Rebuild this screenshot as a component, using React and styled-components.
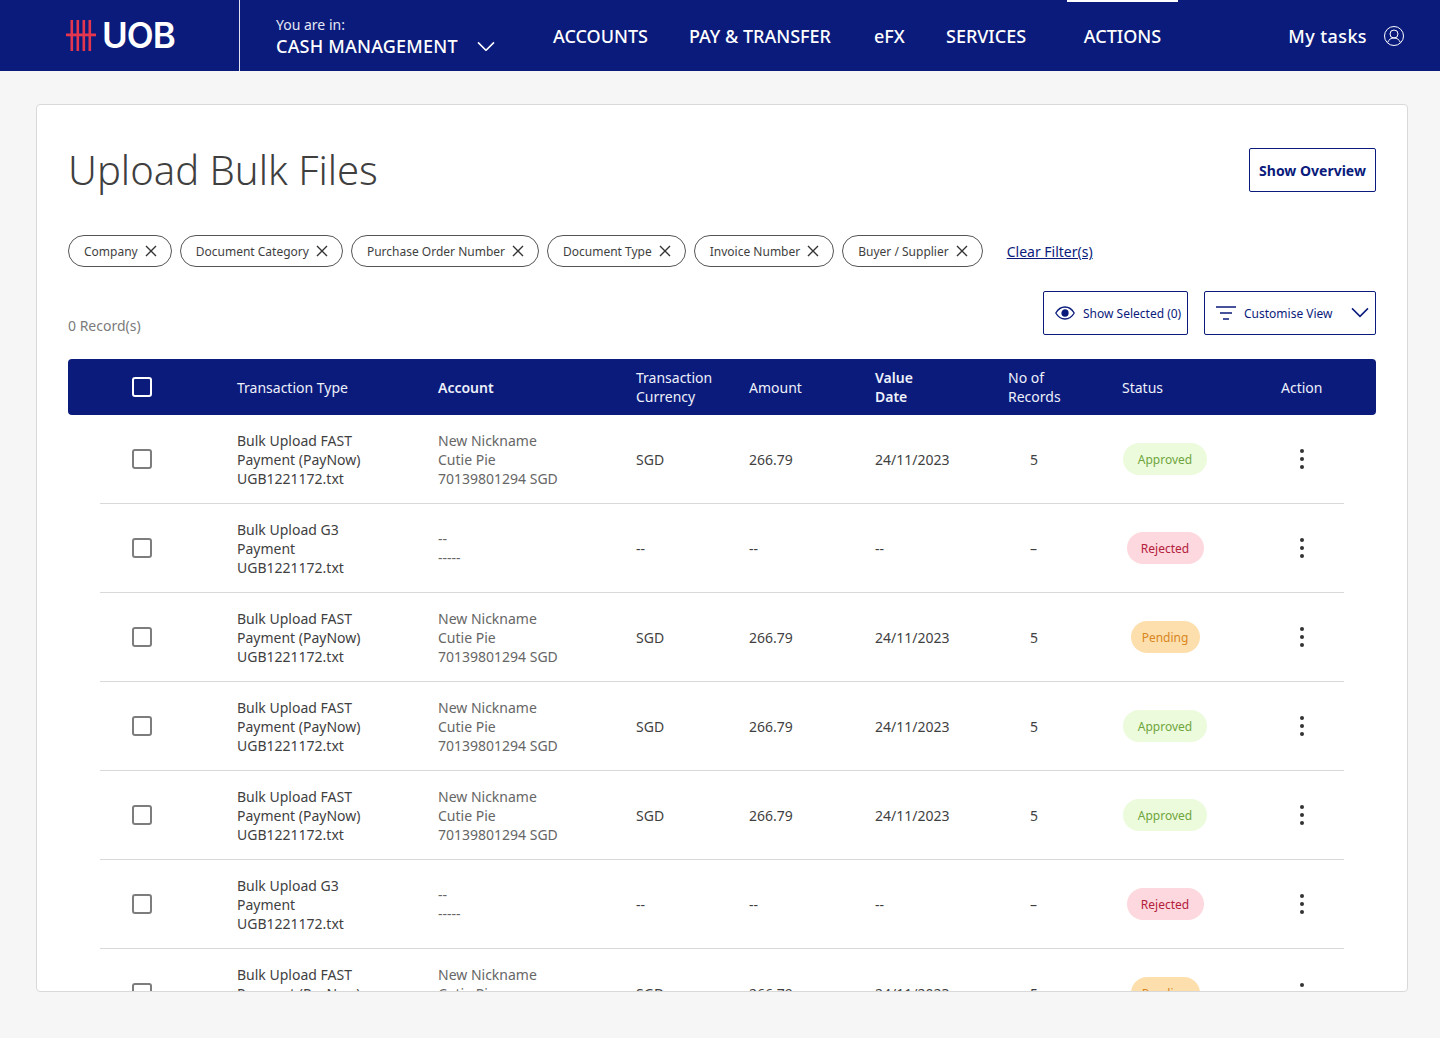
import React from 'react';
import styled, { createGlobalStyle } from 'styled-components';

const NAVY = '#0a1b7c';
const TEXT = '#3f3f3f';

const GlobalStyle = createGlobalStyle`
    html, body {
        margin: 0;
        padding: 0;
        background: #f6f6f6;
        font-family: "Noto Sans", "Open Sans", sans-serif;
        color: ${TEXT};
    }
    * {
        box-sizing: border-box;
    }
`;

const Page = styled.div`
    width: 1440px;
    height: 1038px;
    overflow: hidden;
`;

const Header = styled.header`
    height: 71px;
    background: ${NAVY};
    display: flex;
    color: #fff;
`;

const LogoBox = styled.div`
    width: 240px;
    height: 71px;
    padding-left: 66px;
    display: flex;
    align-items: center;
    gap: 5px;
    border-right: 1px solid #dfe2f0;
`;

const LogoText = styled.span`
    font-family: "Inter", sans-serif;
    font-size: 35px;
    font-weight: 600;
    letter-spacing: -1px;
    line-height: 1;
`;

const Switcher = styled.div`
    width: 313px;
    padding: 15px 0 0 36px;
`;

const SwitcherLabel = styled.div`
    font-size: 14px;
    line-height: 19px;
    color: #e4e7f5;
`;

const SwitcherValue = styled.div`
    display: flex;
    align-items: center;
    gap: 19px;
    font-size: 18px;
    font-weight: 500;
    line-height: 24px;
    letter-spacing: .2px;
`;

const Nav = styled.nav`
    display: flex;
    flex: 1;
    height: 71px;
`;

const NavItem = styled.a`
    width: ${props => props.width}px;
    margin-left: ${props => props.offset || 0}px;
    height: 71px;
    display: flex;
    align-items: center;
    justify-content: ${props => props.active ? 'center' : 'flex-start'};
    font-size: 18px;
    font-weight: 500;
    border-top: 2px solid ${props => props.active ? '#fff' : 'transparent'};
    padding-bottom: 2px;
    white-space: nowrap;
`;

const Tasks = styled.div`
    display: flex;
    align-items: center;
    gap: 17px;
    padding-right: 36px;
    font-size: 18px;
    font-weight: 500;
    letter-spacing: .4px;
`;

const Card = styled.main`
    margin: 33px 0 0 36px;
    width: 1372px;
    height: 888px;
    background: #fff;
    border: 1px solid #d9d9d9;
    border-radius: 4px;
    overflow: hidden;
    padding: 43px 31px 0;
`;

const TitleRow = styled.div`
    display: flex;
    justify-content: space-between;
    height: 44px;
    align-items: center;
`;

const Title = styled.h1`
    margin: 0;
    font-size: 40px;
    font-weight: 300;
    line-height: 48px;
    color: ${TEXT};
`;

const OverviewButton = styled.button`
    width: 127px;
    height: 44px;
    background: #fff;
    border: 1px solid ${NAVY};
    border-radius: 2px;
    color: ${NAVY};
    font-family: inherit;
    font-size: 14px;
    font-weight: 700;
    padding: 0;
`;

const Filters = styled.div`
    display: flex;
    align-items: center;
    gap: 8px;
    margin-top: 43px;
`;

const Chip = styled.div`
    height: 32px;
    display: flex;
    align-items: center;
    gap: 7px;
    padding: 0 14px 0 15px;
    border: 1px solid #555;
    border-radius: 16px;
    font-size: 12px;
    white-space: nowrap;
`;

const ClearLink = styled.a`
    margin-left: 16px;
    font-size: 14px;
    color: ${NAVY};
    text-decoration: underline;
`;

const Tools = styled.div`
    display: flex;
    align-items: flex-end;
    margin-top: 24px;
    height: 44px;
`;

const Records = styled.div`
    flex: 1;
    font-size: 14px;
    line-height: 19px;
    color: #7b7b7b;
    padding-bottom: 0;
`;

const ToolButton = styled.button`
    width: ${props => props.width}px;
    height: 44px;
    margin-left: ${props => props.gap}px;
    display: flex;
    align-items: center;
    background: #fff;
    border: 1px solid ${NAVY};
    border-radius: 2px;
    color: ${NAVY};
    font-family: inherit;
    font-size: 12px;
    padding: 0 0 0 11px;
    white-space: nowrap;
`;

const ToolLabel = styled.span`
    margin-left: ${props => props.gap}px;
`;

const Columns = `
    display: grid;
    grid-template-columns: 137px 201px 198px 113px 126px 133px 114px 159px 63px;
    align-items: center;
`;

const TableHead = styled.div`
    ${Columns}
    height: 56px;
    margin-top: 24px;
    padding-left: 32px;
    background: ${NAVY};
    border-radius: 4px;
    color: #eef0fa;
    font-size: 14px;
    line-height: 19px;
`;

const HeadCell = styled.div`
    font-weight: ${props => props.strong ? 600 : 400};
`;

const Row = styled.div`
    ${Columns}
    height: 89px;
    margin: 0 32px;
    border-bottom: 1px solid #d9d9d9;
    font-size: 14px;
    line-height: 19px;
    color: ${TEXT};
`;

const Cell = styled.div`
    padding-left: ${props => props.indent || 0}px;
    white-space: nowrap;
`;

const Dash = styled.span`
    display: inline-block;
    color: #666;
`;

const Box = styled.span`
    display: block;
    width: 20px;
    height: 20px;
    margin-left: 32px;
    border: 2px solid ${props => props.light ? '#fff' : '#7d7d7d'};
    border-radius: 3px;
`;

const PILLS = {
    Approved: { bg: '#ecfbdc', color: '#6fa53c', width: 84 },
    Rejected: { bg: '#fdd8de', color: '#b4203c', width: 77 },
    Pending: { bg: '#fddfae', color: '#d8861d', width: 69 },
};

const PillSlot = styled.div`
    width: 86px;
    display: flex;
    justify-content: center;
`;

const Pill = styled.span`
    width: ${props => props.width}px;
    height: 32px;
    display: flex;
    align-items: center;
    justify-content: center;
    border-radius: 16px;
    font-size: 12px;
    background: ${props => props.bg};
    color: ${props => props.color};
`;

const Kebab = styled.div`
    display: flex;
    flex-direction: column;
    gap: 4px;
    margin-left: 19px;
`;

const Dot = styled.span`
    width: 4px;
    height: 4px;
    border-radius: 50%;
    background: #333;
`;

const UobMark = () => (
    <svg width="31" height="31" viewBox="0 0 31 31">
        <g fill="#e5364f">
            <rect x="4.5" y="0" width="2.6" height="31" />
            <rect x="10.5" y="0" width="2.6" height="31" />
            <rect x="16.5" y="0" width="2.6" height="31" />
            <rect x="22.5" y="0" width="2.6" height="31" />
            <rect x="0" y="13.5" width="30" height="2.8" />
        </g>
    </svg>
);

const Chevron = ({ color = 'currentColor', size = 18 }) => (
    <svg width={size} height={size * .6} viewBox="0 0 18 10" fill="none" stroke={color} strokeWidth="1.5">
        <path d="M1 1l8 8 8-8" />
    </svg>
);

const CloseIcon = () => (
    <svg width="12" height="12" viewBox="0 0 12 12" fill="none" stroke="#333" strokeWidth="1.4">
        <path d="M1 1l10 10M11 1L1 11" />
    </svg>
);

const UserIcon = () => (
    <svg width="20" height="20" viewBox="0 0 20 20" fill="none" stroke="#fff" strokeWidth="1">
        <circle cx="10" cy="10" r="9.5" />
        <circle cx="10" cy="8" r="4" />
        <path d="M3.6 16.6c1-3 3.4-4.6 6.4-4.6s5.400 1.600 6.400 4.600" />
    </svg>
);

const EyeIcon = () => (
    <svg width="20" height="14" viewBox="0 0 20 14" fill="none" stroke={NAVY} strokeWidth="1.3">
        <path d="M.8 7C3 3.200 6.200 1 10 1s7 2.200 9.200 6C17 10.800 13.800 13 10 13S3 10.800.8 7z" />
        <circle cx="10" cy="7" r="3" fill={NAVY} />
    </svg>
);

const FilterIcon = () => (
    <svg width="20" height="14" viewBox="0 0 20 14" fill="none" stroke={NAVY} strokeWidth="1.6">
        <path d="M0 1h20M4 7h12M7 13h6" />
    </svg>
);

const filters = ['Company', 'Document Category', 'Purchase Order Number', 'Document Type', 'Invoice Number', 'Buyer / Supplier'];

const fast = { type: ['Bulk Upload FAST', 'Payment (PayNow)'], account: ['New Nickname', 'Cutie Pie', '70139801294 SGD'], currency: 'SGD', amount: '266.79', date: '24/11/2023', count: '5' };
const g3 = { type: ['Bulk Upload G3', 'Payment'], account: ['--', '-----'], currency: '--', amount: '--', date: '--', count: '–' };

const rows = [
    { ...fast, status: 'Approved' },
    { ...g3, status: 'Rejected' },
    { ...fast, status: 'Pending' },
    { ...fast, status: 'Approved' },
    { ...fast, status: 'Approved' },
    { ...g3, status: 'Rejected' },
    { ...fast, status: 'Pending' },
];

const App = () => {
    return (
        <Page>
            <GlobalStyle />
            <Header>
                <LogoBox>
                    <UobMark />
                    <LogoText>UOB</LogoText>
                </LogoBox>
                <Switcher>
                    <SwitcherLabel>You are in:</SwitcherLabel>
                    <SwitcherValue>CASH MANAGEMENT <Chevron /></SwitcherValue>
                </Switcher>
                <Nav>
                    <NavItem width={136}>ACCOUNTS</NavItem>
                    <NavItem width={185}>PAY &amp; TRANSFER</NavItem>
                    <NavItem width={72}>eFX</NavItem>
                    <NavItem width={121}>SERVICES</NavItem>
                    <NavItem width={111} active>ACTIONS</NavItem>
                </Nav>
                <Tasks>My tasks <UserIcon /></Tasks>
            </Header>
            <Card>
                <TitleRow>
                    <Title>Upload Bulk Files</Title>
                    <OverviewButton>Show Overview</OverviewButton>
                </TitleRow>
                <Filters>
                    {filters.map((name) => (
                        <Chip key={name}>{name} <CloseIcon /></Chip>
                    ))}
                    <ClearLink>Clear Filter(s)</ClearLink>
                </Filters>
                <Tools>
                    <Records>0 Record(s)</Records>
                    <ToolButton width={145}>
                        <EyeIcon />
                        <ToolLabel gap={8}>Show Selected (0)</ToolLabel>
                    </ToolButton>
                    <ToolButton width={172} gap={16}>
                        <FilterIcon />
                        <ToolLabel gap={8}>Customise View</ToolLabel>
                        <ToolLabel gap={18}><Chevron /></ToolLabel>
                    </ToolButton>
                </Tools>
                <TableHead>
                    <Box light />
                    <HeadCell>Transaction Type</HeadCell>
                    <HeadCell strong>Account</HeadCell>
                    <HeadCell>Transaction<br />Currency</HeadCell>
                    <HeadCell>Amount</HeadCell>
                    <HeadCell strong>Value<br />Date</HeadCell>
                    <HeadCell>No of<br />Records</HeadCell>
                    <HeadCell>Status</HeadCell>
                    <HeadCell>Action</HeadCell>
                </TableHead>
                {rows.map((row, i) => (
                    <Row key={i}>
                        <Box />
                        <Cell>
                            {row.type.map((line) => <div key={line}>{line}</div>)}
                            <div>UGB1221172.txt</div>
                        </Cell>
                        <Cell>
                            {row.account.map((line) => <div key={line}><Dash>{line}</Dash></div>)}
                        </Cell>
                        <Cell>{row.currency}</Cell>
                        <Cell>{row.amount}</Cell>
                        <Cell>{row.date}</Cell>
                        <Cell indent={22}>{row.count}</Cell>
                        <PillSlot>
                            <Pill {...PILLS[row.status]}>{row.status}</Pill>
                        </PillSlot>
                        <Kebab><Dot /><Dot /><Dot /></Kebab>
                    </Row>
                ))}
            </Card>
        </Page>
    );
};

export default App;
